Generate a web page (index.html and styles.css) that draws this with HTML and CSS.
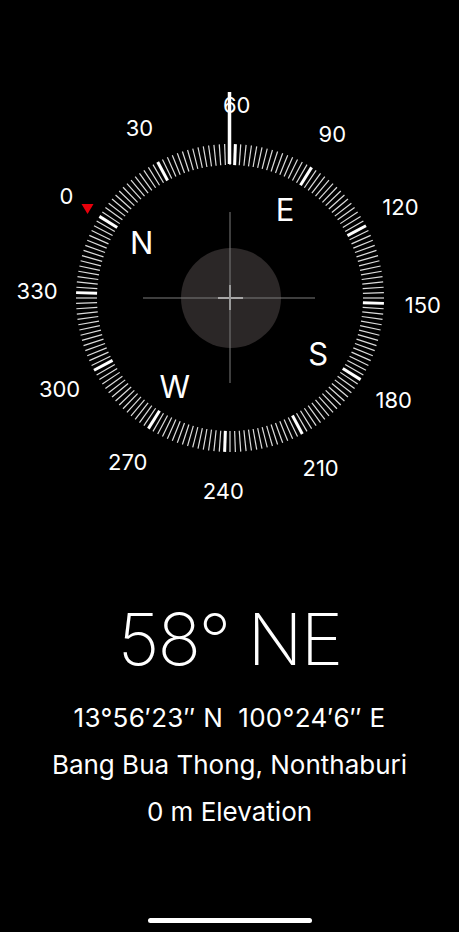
FILE: index.html
```html
<!DOCTYPE html>
<html lang="en">
<head>
    <meta charset="UTF-8">
    <meta name="viewport" content="width=device-width, initial-scale=1.0">
    <title>Compass</title>
    <link rel="stylesheet" href="styles.css">
</head>
<body>
    <div class="screen">
        <svg class="dial" id="dial" width="459" height="560" viewBox="0 0 459 560">
            <circle class="level" cx="231" cy="298" r="50"></circle>
            <line class="cross" x1="230" y1="212" x2="230" y2="383"></line>
            <line class="cross" x1="143" y1="298" x2="315" y2="298"></line>
            <line class="cross-small" x1="218" y1="298" x2="243" y2="298"></line>
            <line class="cross-stem" x1="230" y1="285" x2="230" y2="310"></line>
            <g id="ring"></g>
            <line class="pointer" x1="229.5" y1="92" x2="229.5" y2="164"></line>
        </svg>

        <div class="reading">
            <div class="heading">58° NE</div>
            <div class="info coords">13°56′23″ N&nbsp;&nbsp;100°24′6″ E</div>
            <div class="info">Bang Bua Thong, Nonthaburi</div>
            <div class="info">0 m Elevation</div>
        </div>

        <div class="home-bar"></div>
    </div>

    <script>
        // dial rotated so the current heading sits under the pointer
        const heading = 58;
        const cx = 230, cy = 298;
        const ring = document.getElementById('ring');
        const ns = 'http://www.w3.org/2000/svg';

        function point(bearing, r) {
            const a = (bearing - heading) * Math.PI / 180;
            return [cx + r * Math.sin(a), cy - r * Math.cos(a)];
        }

        function add(tag, attrs, text) {
            const el = document.createElementNS(ns, tag);
            for (const k in attrs) el.setAttribute(k, attrs[k]);
            if (text !== undefined) el.textContent = text;
            ring.appendChild(el);
            return el;
        }

        for (let b = 0; b < 360; b += 2) {
            const p1 = point(b, 133);
            const p2 = point(b, 154);
            add('line', {
                x1: p1[0], y1: p1[1], x2: p2[0], y2: p2[1],
                class: b % 30 === 0 ? 'tick major' : 'tick'
            });
        }

        for (let b = 0; b < 360; b += 30) {
            const p = point(b, 193);
            add('text', { x: p[0], y: p[1], class: 'degree' }, b);
        }

        const letters = { N: 0, E: 90, S: 180, W: 270 };
        for (const l in letters) {
            const p = point(letters[l], 104);
            add('text', { x: p[0], y: p[1], class: 'cardinal' }, l);
        }

        // red north marker
        const n = point(0, 168);
        add('polygon', {
            points: (n[0] - 6) + ',' + (n[1] - 5) + ' ' + (n[0] + 6) + ',' + (n[1] - 5) + ' ' + n[0] + ',' + (n[1] + 5),
            class: 'north'
        });
    </script>
</body>
</html>
```

FILE: styles.css
```css
body {
    margin: 0;
    background-color: #000;
    font-family: Inter, "Noto Sans", "Liberation Sans", sans-serif;
    color: #fff;
}

.screen {
    width: 459px;
    height: 932px;
    display: flex;
    flex-direction: column;
    align-items: center;
    overflow: hidden;
}

.dial {
    display: block;
    flex-shrink: 0;
}

.level {
    fill: #2b2727;
}

.cross {
    stroke: #7d7d7d;
    stroke-width: 1;
}

.cross-small {
    stroke: #c4c4c4;
    stroke-width: 1.5;
}

.cross-stem {
    stroke: #9a9a9a;
    stroke-width: 2;
}

.tick {
    stroke: #dcdcdc;
    stroke-width: 1.2;
}

.tick.major {
    stroke: #fff;
    stroke-width: 3;
}

.pointer {
    stroke: #fff;
    stroke-width: 3.5;
}

.degree {
    fill: #fff;
    font-size: 22px;
    text-anchor: middle;
    dominant-baseline: central;
}

.cardinal {
    fill: #fff;
    font-size: 31px;
    text-anchor: middle;
    dominant-baseline: central;
}

.north {
    fill: #e8000b;
}

.reading {
    display: flex;
    flex-direction: column;
    align-items: center;
    padding-top: 43px;
}

.heading {
    font-size: 72px;
    font-weight: 200;
    line-height: 72px;
    letter-spacing: -2px;
    margin-bottom: 19px;
}

.info {
    font-size: 26px;
    line-height: 47px;
}

.coords {
    letter-spacing: 0.3px;
}

.home-bar {
    width: 164px;
    height: 5px;
    border-radius: 3px;
    background-color: #fff;
    margin-top: auto;
    margin-bottom: 9px;
}
```
